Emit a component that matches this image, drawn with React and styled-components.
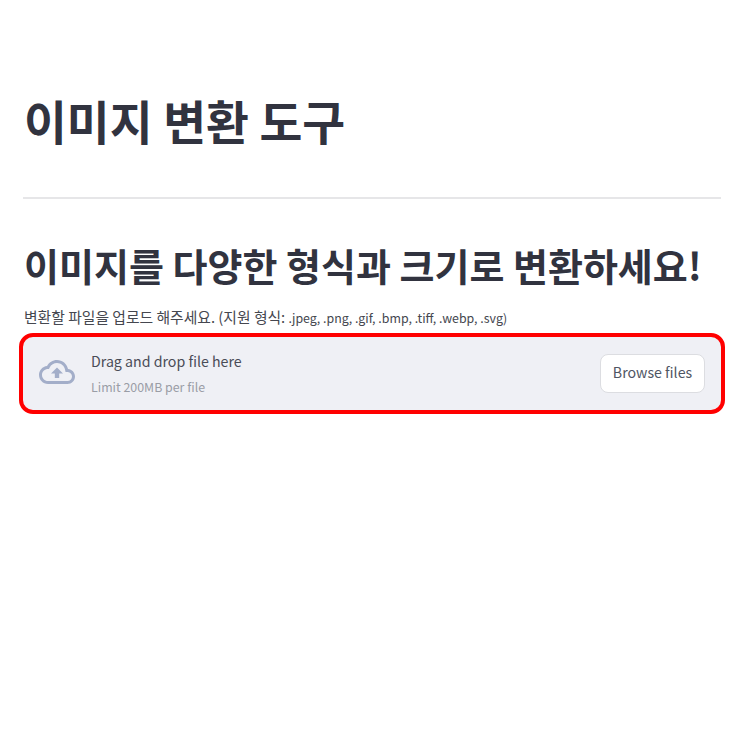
import React from "react";
import styled, { createGlobalStyle } from "styled-components";

const GlobalStyle = createGlobalStyle`
  body {
    margin: 0;
    background: #ffffff;
    font-family: "Noto Sans CJK KR", "Noto Sans", sans-serif;
    color: #31333f;
  }
`;

const App = () => {
  return (
    <>
      <GlobalStyle />
      <Page>
        <Title>이미지 변환 도구</Title>
        <Divider />
        <Heading>이미지를 다양한 형식과 크기로 변환하세요!</Heading>
        <Label>
          변환할 파일을 업로드 해주세요. (지원 형식: <Formats>.jpeg, .png, .gif, .bmp, .tiff, .webp, .svg)</Formats>
        </Label>
        <Dropzone>
          <DropLeft>
            <CloudIcon viewBox="0 0 24 24">
              <path d="M19.35 10.04C18.67 6.59 15.64 4 12 4 9.11 4 6.6 5.64 5.35 8.04 2.34 8.36 0 10.91 0 14c0 3.31 2.69 6 6 6h13c2.76 0 5-2.24 5-5 0-2.64-2.05-4.78-4.65-4.96zM19 18H6c-2.21 0-4-1.79-4-4 0-2.05 1.53-3.76 3.56-3.97l1.07-.11.5-.95C8.08 7.14 9.94 6 12 6c2.62 0 4.88 1.86 5.39 4.43l.3 1.5 1.53.11c1.56.1 2.78 1.41 2.78 2.96 0 1.65-1.35 3-3 3zM8 13h2.55v3h2.9v-3H16l-4-4z" />
            </CloudIcon>
            <DropText>
              <DropTitle>Drag and drop file here</DropTitle>
              <DropHint>Limit 200MB per file</DropHint>
            </DropText>
          </DropLeft>
          <BrowseButton>Browse files</BrowseButton>
        </Dropzone>
      </Page>
    </>
  );
};

const Page = styled.div`
  padding: 89px 22px 0 23px;
  height: 743px;
  box-sizing: border-box;
`;

const Title = styled.h1`
  margin: 0;
  font-size: 46.6px;
  font-weight: 700;
  line-height: 62px;
  padding-left: 1px;
`;

const Divider = styled.hr`
  margin: 46px 0 0;
  border: none;
  height: 2px;
  background: #e6e6e8;
`;

const Heading = styled.h2`
  margin: 36px 0 0;
  padding-left: 1px;
  font-size: 38px;
  font-weight: 700;
  line-height: 60px;
`;

const Label = styled.div`
  margin-top: 12px;
  padding-left: 1px;
  font-size: 14.8px;
  line-height: 20px;
  color: #45474f;
`;

const Formats = styled.span`
  font-size: 12.4px;
`;

const Dropzone = styled.div`
  margin-top: 9px;
  height: 73px;
  box-sizing: border-box;
  display: flex;
  align-items: center;
  justify-content: space-between;
  padding: 0 16px 1px;
  background: #eff0f5;
  border-radius: 10px;
  outline: 4px solid #ff0000;
  outline-offset: 0;
`;

const DropLeft = styled.div`
  display: flex;
  align-items: center;
  gap: 16px;
`;

const CloudIcon = styled.svg`
  width: 36px;
  height: 36px;
  margin-top: -2px;
  fill: #a3aec9;
  flex: none;
`;

const DropText = styled.div`
  display: flex;
  flex-direction: column;
  gap: 6px;
  padding-top: 2px;
`;

const DropTitle = styled.span`
  font-size: 14.2px;
  line-height: 20px;
  color: #4a4c57;
`;

const DropHint = styled.span`
  font-size: 12.4px;
  line-height: 20px;
  color: #9a9da6;
`;

const BrowseButton = styled.button`
  height: 39px;
  width: 105px;
  padding: 0 0 2px;
  background: #ffffff;
  border: 1px solid #dcdde1;
  border-radius: 8px;
  font-family: inherit;
  font-size: 14.2px;
  color: #4f5563;
`;

export default App;
